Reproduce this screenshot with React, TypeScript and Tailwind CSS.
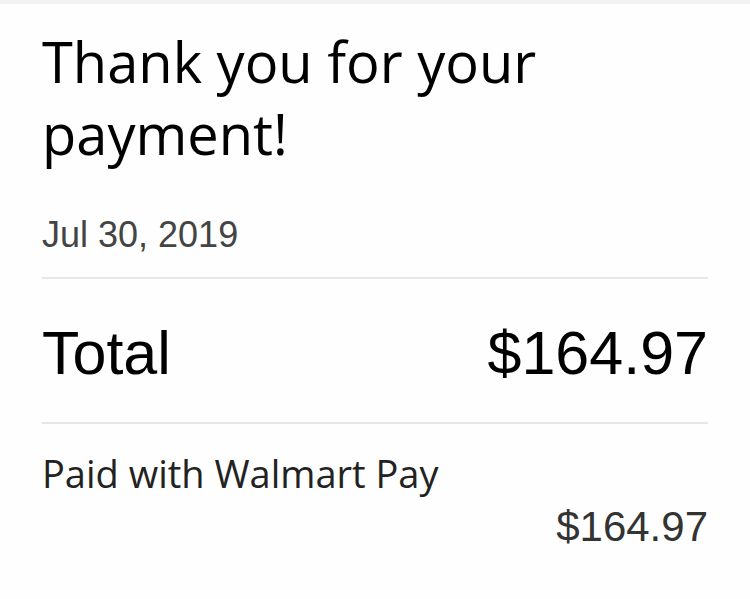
import React from "react";

export default function App() {
  return (
    <div className="w-[750px] h-[599px] bg-[#fefefe] overflow-hidden flex flex-col">
      <div className="h-[4px] bg-[#f2f2f2]" />
      <div className="pl-[42px] pr-[42px] flex flex-col">
        <h1
          className="mt-[21px] text-[56px] leading-[72px] text-black"
          style={{ fontFamily: '"Open Sans", sans-serif' }}
        >
          Thank you for your
          <br />
          payment!
        </h1>
        <div
          className="mt-[46px] text-[36px] leading-[40px] text-[#444444]"
          style={{ fontFamily: '"Liberation Sans", Arial, sans-serif' }}
        >
          Jul 30, 2019
        </div>
        <div className="mt-[22px] h-[2px] bg-[#e6e6e6]" />
        <div
          className="mt-[44px] flex justify-between items-baseline text-black"
          style={{ fontFamily: '"Liberation Sans", Arial, sans-serif' }}
        >
          <span className="text-[61px] leading-[60px]">Total</span>
          <span className="text-[61px] leading-[60px]">$164.97</span>
        </div>
        <div className="mt-[39px] h-[2px] bg-[#e6e6e6]" />
        <div
          className="mt-[27px] text-[38px] leading-[44px] text-[#222222]"
          style={{ fontFamily: '"Open Sans", sans-serif' }}
        >
          Paid with Walmart Pay
        </div>
        <div
          className="mt-[10px] text-right text-[42px] leading-[44px] text-[#333333]"
          style={{ fontFamily: '"Liberation Sans", Arial, sans-serif' }}
        >
          $164.97
        </div>
      </div>
    </div>
  );
}
